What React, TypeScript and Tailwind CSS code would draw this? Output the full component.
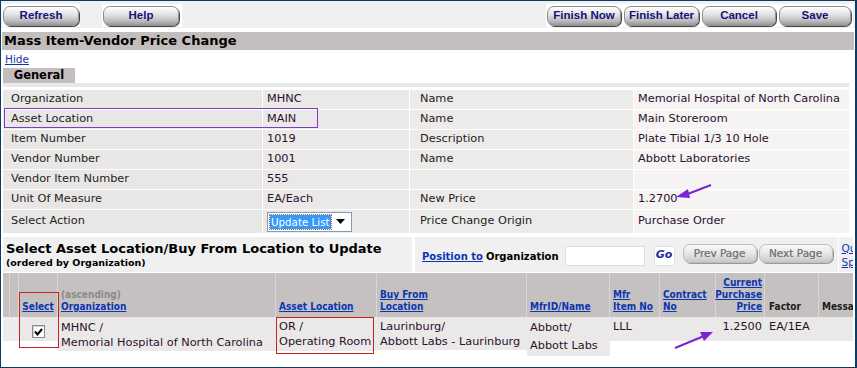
import React from "react";

const F = { fontFamily: '"DejaVu Sans", Verdana, sans-serif' };

function Btn({ label, className }: { label: string; className: string }) {
  return (
    <div
      className={
        "h-[20px] rounded-[7px] flex items-center justify-center text-[11.5px] font-bold text-[#14147a] border border-[#8f8f8f] bg-[linear-gradient(to_bottom,#ffffff,#e0e0e0_45%,#b8b8b8_80%,#969696)] shadow-[1px_1px_0_#4a4a4a] whitespace-nowrap " +
        className
      }
      style={{ fontFamily: '"Liberation Sans", Arial, sans-serif' }}
    >
      {label}
    </div>
  );
}

function GrayBtn({ label, className }: { label: string; className: string }) {
  return (
    <div
      className={
        "h-[19px] rounded-[7px] flex items-center justify-center text-[10.5px] text-[#7a7a7a] border border-[#bdbdbd] bg-[linear-gradient(to_bottom,#fafafa,#e6e6e6_50%,#c8c8c8)] shadow-[1px_1px_0_#9a9a9a] whitespace-nowrap " +
        className
      }
      style={{ textShadow: "0 0 0.4px #7a7a7a" }}
    >
      {label}
    </div>
  );
}

const rows: [string, string, string, string][] = [
  ["Organization", "MHNC", "Name", "Memorial Hospital of North Carolina"],
  ["Asset Location", "MAIN", "Name", "Main Storeroom"],
  ["Item Number", "1019", "Description", "Plate Tibial 1/3 10 Hole"],
  ["Vendor Number", "1001", "Name", "Abbott Laboratories"],
  ["Vendor Item Number", "555", "", ""],
  ["Unit Of Measure", "EA/Each", "New Price", "1.2700"],
];

const H = ({ children }: { children: React.ReactNode }) => (
  <span className="underline text-[#0a36b0] whitespace-nowrap">{children}</span>
);

export default function App() {
  return (
    <div
      className="relative w-[857px] h-[368px] border border-r-2 border-[#0c3b66] bg-white overflow-hidden text-[11.3px] text-[#222]"
      style={F}
    >
      {/* toolbar */}
      <div className="flex h-[27px] bg-[#f0f0f0] pt-[3px] pb-[1px]">
        <div className="ml-[1px] w-[78px] bg-white flex items-center pl-[1px]">
          <Btn label="Refresh" className="w-[76px]" />
        </div>
        <div className="ml-[22px] w-[80px] bg-white flex items-center pl-[1px]">
          <Btn label="Help" className="w-[76px]" />
        </div>
        <div className="ml-auto mr-[2px] w-[307px] bg-white flex items-center gap-[3px] pl-[1px]">
          <Btn label="Finish Now" className="w-[74px]" />
          <Btn label="Finish Later" className="w-[75px]" />
          <Btn label="Cancel" className="w-[74px]" />
          <Btn label="Save" className="w-[72px]" />
        </div>
      </div>

      {/* title */}
      <div className="mt-[4px] mx-[1px] h-[18px] bg-[#c3bebd] flex items-center pl-[2px] text-[13px] font-bold text-black">
        Mass Item-Vendor Price Change
      </div>

      <div className="px-[2px]">
        <div className="mt-[3px] h-[13px] leading-[13px] pl-[2px] text-[10.5px] text-[#1033b0] underline">Hide</div>
        <div className="mt-[2px] w-[72px] h-[15px] bg-[#c3bebd] flex items-center justify-center text-[11.5px] font-bold text-black">
          General
        </div>
        <div className="h-[4px] bg-[#e8e8e8] w-[846px]" />

        {/* detail table */}
        <div className="mt-[3px] w-[846px] flex flex-col gap-px">
          {rows.map((r, i) => (
            <div key={i} className="flex gap-px h-[19px]">
              <div className="w-[259px] bg-[#e9e7e6] flex items-center pl-[8px]">{r[0]}</div>
              <div className="w-[146px] bg-[#ebe9e8] flex items-center pl-[4px] text-[#2a1030]">{r[1]}</div>
              <div className="w-[223px] bg-[#ecebea] flex items-center pl-[10px]">{r[2]}</div>
              <div className="flex-1 bg-[#f6f3f3] flex items-center pl-[4px] text-[#2a1030] whitespace-nowrap">{r[3]}</div>
            </div>
          ))}
          <div className="flex gap-px h-[23px]">
            <div className="w-[259px] bg-[#e9e7e6] flex items-center pl-[8px]">Select Action</div>
            <div className="w-[146px] bg-[#ebe9e8] flex items-center pl-[4px]">
              <div className="w-[85px] h-[20px] bg-white border border-[#7f9db9] flex items-center pl-[2px] pr-[2px]">
                <span className="bg-[#3399ff] text-white text-[10.3px] px-[1px] outline-1 outline-dotted outline-[#c06a20] leading-[14px] whitespace-nowrap">
                  Update List
                </span>
                <svg className="ml-auto mr-[4px] shrink-0" width="9" height="5" viewBox="0 0 9 5">
                  <path d="M0 0 H9 L4.5 5 Z" fill="#000" />
                </svg>
              </div>
            </div>
            <div className="w-[223px] bg-[#ecebea] flex items-center pl-[10px]">Price Change Origin</div>
            <div className="flex-1 bg-[#f6f3f3] flex items-center pl-[4px] text-[#2a1030]">Purchase Order</div>
          </div>
        </div>

        {/* section 2 header */}
        <div className="mt-[4px] flex h-[35px] gap-[3px]">
          <div className="w-[409px] shrink-0 bg-[#f0f0f0] pl-[3px] pt-[4px]">
            <div className="text-[13px] font-bold text-black leading-[16px] whitespace-nowrap">
              Select Asset Location/Buy From Location to Update
            </div>
            <div className="text-[9.5px] font-bold text-black leading-[12px]">(ordered by Organization)</div>
          </div>
          <div className="flex-1 min-w-0 bg-[#f0f0f0] flex items-center overflow-hidden">
            <div className="pl-[7px] text-[10px] font-bold flex items-center mt-[3px] whitespace-nowrap shrink-0">
              <span className="underline text-[#0a36b0]">Position to</span>
              <span className="ml-[3px] text-black">Organization</span>
            </div>
            <div className="ml-[6px] shrink-0 w-[80px] h-[20px] bg-white border border-[#dddddd] mt-[2px]" />
            <div className="ml-[9px] shrink-0 w-[21px] h-[20px] bg-white border border-[#e2e2e2] flex items-center justify-center text-[11px] font-bold italic text-[#1a2a9c] mt-[2px]">
              Go
            </div>
            <GrayBtn label="Prev Page" className="ml-[8px] shrink-0 w-[74px] -mt-[2px]" />
            <GrayBtn label="Next Page" className="ml-[2px] shrink-0 w-[74px] -mt-[2px]" />
            <div className="ml-[5px] shrink-0 self-stretch w-px bg-white" />
            <div className="ml-[3px] flex flex-col text-[10.5px] leading-[14px] text-[#0a36b0] underline">
              <span>Qu</span>
              <span>Sp</span>
            </div>
          </div>
        </div>

        {/* grid header */}
        <div
          className="mt-[1px] flex h-[44px] bg-[#c5c1c0] items-end text-[10px] font-bold leading-[12px]"
          style={{ fontFamily: '"DejaVu Sans Condensed", "DejaVu Sans", sans-serif' }}
        >
          <div className="w-[7px] self-stretch border-r border-[#d9d6d6]" />
          <div className="w-[9px] self-stretch border-r border-[#d9d6d6]" />
          <div className="w-[39px] self-stretch border-r border-[#d9d6d6] flex items-end justify-center pb-[4px]"><H>Select</H></div>
          <div className="w-[218px] self-stretch border-r border-[#d9d6d6] flex flex-col justify-end pl-[3px] pb-[4px]">
            <span className="text-[#8a8a8a]">(ascending)</span>
            <H>Organization</H>
          </div>
          <div className="w-[101px] self-stretch border-r border-[#d9d6d6] flex items-end pl-[3px] pb-[4px]"><H>Asset Location</H></div>
          <div className="w-[150px] self-stretch border-r border-[#d9d6d6] flex flex-col justify-end pl-[3px] pb-[4px]">
            <H>Buy From</H>
            <H>Location</H>
          </div>
          <div className="w-[83px] self-stretch border-r border-[#d9d6d6] flex items-end pl-[3px] pb-[4px]"><H>MfrID/Name</H></div>
          <div className="w-[50px] self-stretch border-r border-[#d9d6d6] flex flex-col justify-end pl-[3px] pb-[4px]">
            <H>Mfr</H>
            <H>Item No</H>
          </div>
          <div className="w-[56px] self-stretch border-r border-[#d9d6d6] flex flex-col justify-end pl-[3px] pb-[4px]">
            <H>Contract</H>
            <H>No</H>
          </div>
          <div className="w-[49px] self-stretch border-r border-[#d9d6d6] flex flex-col justify-end items-end pr-[2px] pb-[4px]">
            <H>Current</H>
            <H>Purchase</H>
            <H>Price</H>
          </div>
          <div className="w-[54px] self-stretch border-r border-[#d9d6d6] flex items-end pl-[4px] pb-[4px] text-[#1a1a1a]">Factor</div>
          <div className="flex-1 min-w-0 self-stretch flex items-end pl-[3px] pb-[4px] text-[#1a1a1a] overflow-hidden whitespace-nowrap">Messa</div>
        </div>

        {/* data row */}
        <div className="flex items-start text-[11.3px] leading-[15px] text-[#2a1030]">
          <div className="w-[7px] h-[24px] bg-[#eeeded] border-r border-[#e3eeee]" />
          <div className="w-[9px] h-[24px] bg-[#eeeded] border-r border-[#e3eeee]" />
          <div className="w-[39px] h-[24px] bg-[#ebe9e8] border-r border-[#e3eeee] flex justify-center pt-[8px]">
            <div className="w-[13px] h-[13px] bg-white border border-[#8c8c8c] flex items-center justify-center shadow-[inset_1px_1px_0_#cfcfcf]">
              <svg width="9" height="8" viewBox="0 0 9 8">
                <path d="M1 3.5 L3.5 6.5 L8 1" stroke="#000" strokeWidth="2" fill="none" />
              </svg>
            </div>
          </div>
          <div className="w-[218px] h-[34px] bg-[#ebe9e8] border-r border-[#e3eeee] pl-[3px] pt-[3px] whitespace-nowrap">
            MHNC /<br />Memorial Hospital of North Carolina
          </div>
          <div className="w-[101px] h-[34px] bg-[#ebe9e8] border-r border-[#e3eeee] pl-[3px] pt-[2px] whitespace-nowrap">
            OR /<br />Operating Room
          </div>
          <div className="w-[150px] h-[33px] bg-[#ebe9e8] border-r border-[#e3eeee] pl-[3px] pt-[2px] whitespace-nowrap">
            Laurinburg/<br />Abbott Labs - Laurinburg
          </div>
          <div className="w-[83px] h-[39px] bg-[#ebe9e8] border-r border-[#e3eeee] pl-[3px] pt-[2px] leading-[18px]">
            Abbott/<br />Abbott Labs
          </div>
          <div className="w-[50px] h-[24px] bg-[#ebe9e8] border-r border-[#e3eeee] pl-[3px] pt-[2px]">LLL</div>
          <div className="w-[56px] h-[24px] bg-[#ebe9e8] border-r border-[#e3eeee]" />
          <div className="w-[49px] h-[24px] bg-[#ebe9e8] border-r border-[#e3eeee] text-right pr-[2px] pt-[2px]">1.2500</div>
          <div className="w-[54px] h-[24px] bg-[#ebe9e8] border-r border-[#e3eeee] pl-[4px] pt-[2px]">EA/1EA</div>
          <div className="flex-1 h-[24px] bg-[#ebe9e8]" />
        </div>
      </div>

      {/* overlays */}
      <div className="absolute left-[3px] top-[107px] w-[314px] h-[20px] border border-[#7d3cc8]" />
      <div className="absolute left-[18px] top-[291px] w-[40px] h-[56px] border border-[#cc2020]" />
      <div className="absolute left-[275px] top-[316px] w-[98px] h-[37px] border border-[#cc2020]" />
      <svg className="absolute left-0 top-0 pointer-events-none" width="857" height="368">
        <line x1="710" y1="184" x2="684" y2="194" stroke="#7a24d8" strokeWidth="2" />
        <path d="M675 196 L687 188 L689 197 Z" fill="#7a24d8" />
        <line x1="674" y1="347" x2="703" y2="335" stroke="#7a24d8" strokeWidth="2" />
        <path d="M712 331 L699 331 L703 340 Z" fill="#7a24d8" />
      </svg>
    </div>
  );
}
